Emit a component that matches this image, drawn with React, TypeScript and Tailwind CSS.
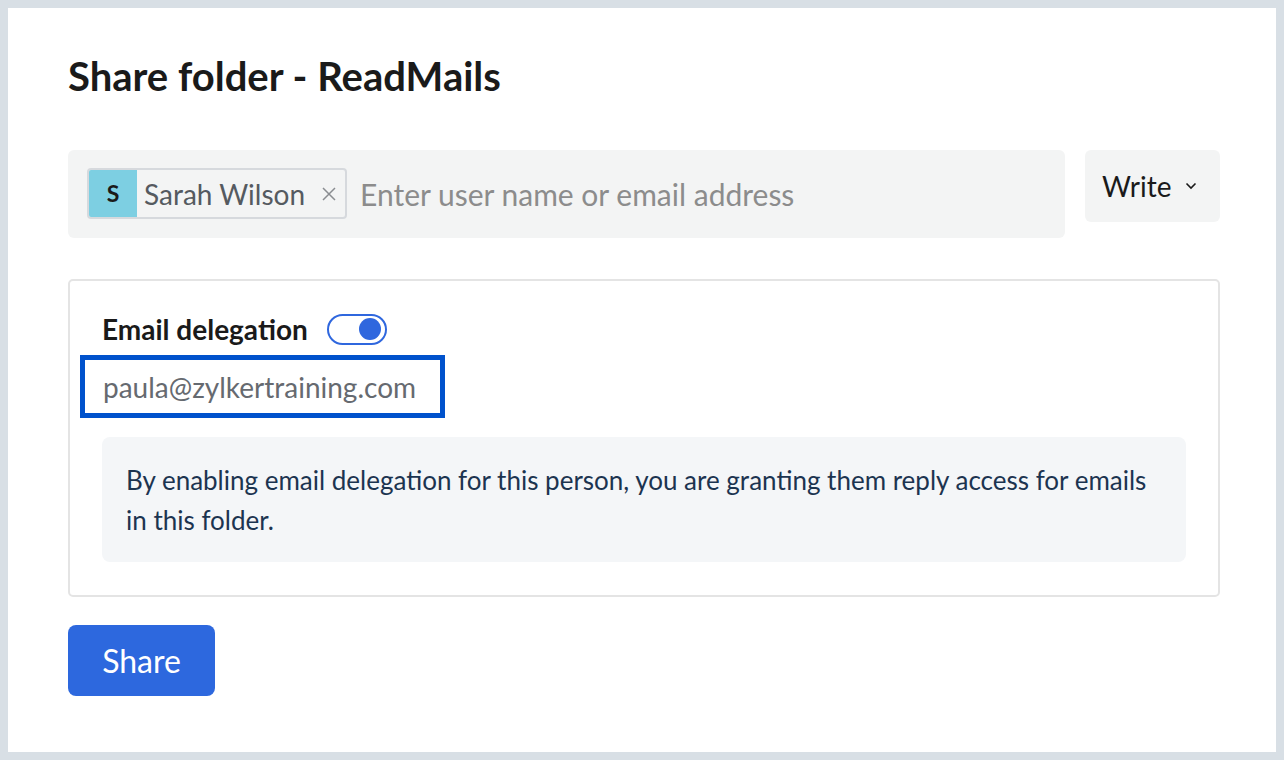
import React, { useState } from 'react';

const App = () => {
  const [delegation, setDelegation] = useState(true);

  return (
    <div className="bg-[#d8dfe5] p-2 h-[760px] w-[1284px] font-['Lato','Noto_Sans',sans-serif]">
      <div className="bg-white h-full pl-[60px] pr-[56px] pt-[44px]">
        <h1 className="text-[40px] font-bold text-[#1a1a1a] leading-[48px]">
          Share folder - ReadMails
        </h1>

        {/* Recipient row */}
        <div className="flex gap-5 mt-[50px]">
          <div className="flex-1 h-[88px] bg-[#f3f4f4] rounded-md flex items-start pt-[18px] pl-[19px]">
            <div className="flex items-center h-[51px] border-2 border-[#d6d9dd] rounded-[4px] overflow-hidden">
              <div className="w-[48px] h-full bg-[#7dcfe2] flex items-center justify-center text-[23px] font-bold text-[#1a1a1a]">
                S
              </div>
              <span className="ml-[7px] text-[28px] text-[#555a60]">Sarah Wilson</span>
              <span className="ml-[16px] mr-[8px] text-[#8a8d91]">
                <svg width="16" height="16" viewBox="0 0 16 16" fill="none" stroke="currentColor" strokeWidth="1.5">
                  <path d="M2 2 L14 14 M14 2 L2 14" />
                </svg>
              </span>
            </div>
            <input
              className="ml-[13px] mt-[4px] flex-1 bg-transparent outline-none text-[30px] text-[#555] placeholder:text-[#8c8c8c]"
              placeholder="Enter user name or email address"
            />
          </div>
          <button className="w-[135px] h-[72px] bg-[#f3f4f4] rounded-md flex items-center pl-[17px] gap-[14px] text-[28px] text-[#1a1a1a]">
            <span>Write</span>
            <svg width="12" height="8" viewBox="0 0 12 8" fill="none" stroke="#1a1a1a" strokeWidth="1.6">
              <path d="M1.5 1.5 L6 6 L10.5 1.5" />
            </svg>
          </button>
        </div>

        {/* Delegation panel */}
        <div className="mt-[41px] h-[318px] border-2 border-[#e4e4e4] rounded-[5px] pt-[31px] px-[10px]">
          <div className="flex items-center pl-[22px] h-[34px]">
            <span className="text-[28px] font-bold text-[#1a1a1a]">Email delegation</span>
            <button
              onClick={() => setDelegation(!delegation)}
              className="ml-[19px] w-[60px] h-[31px] rounded-full border-2 border-[#2f67de] flex items-center px-[4px] justify-end"
            >
              <span className="w-[22px] h-[22px] rounded-full bg-[#2f67de]" />
            </button>
          </div>
          <div className="mt-[9px] w-[365px] h-[63px] border-[5px] border-[#0052cc] flex items-center pl-[18px]">
            <span className="text-[28px] text-[#666a70]">paula@zylkertraining.com</span>
          </div>
          <div className="mt-[19px] mx-[22px] h-[125px] bg-[#f4f6f8] rounded-lg pl-[24px] pr-[20px] pt-[23px] text-[26px] leading-[40px] text-[#1c3450]">
            By enabling email delegation for this person, you are granting them reply access for emails in this folder.
          </div>
        </div>

        <button className="mt-[28px] w-[147px] h-[71px] bg-[#2d68de] rounded-lg text-white text-[32px]">
          Share
        </button>
      </div>
    </div>
  );
};

export default App;
